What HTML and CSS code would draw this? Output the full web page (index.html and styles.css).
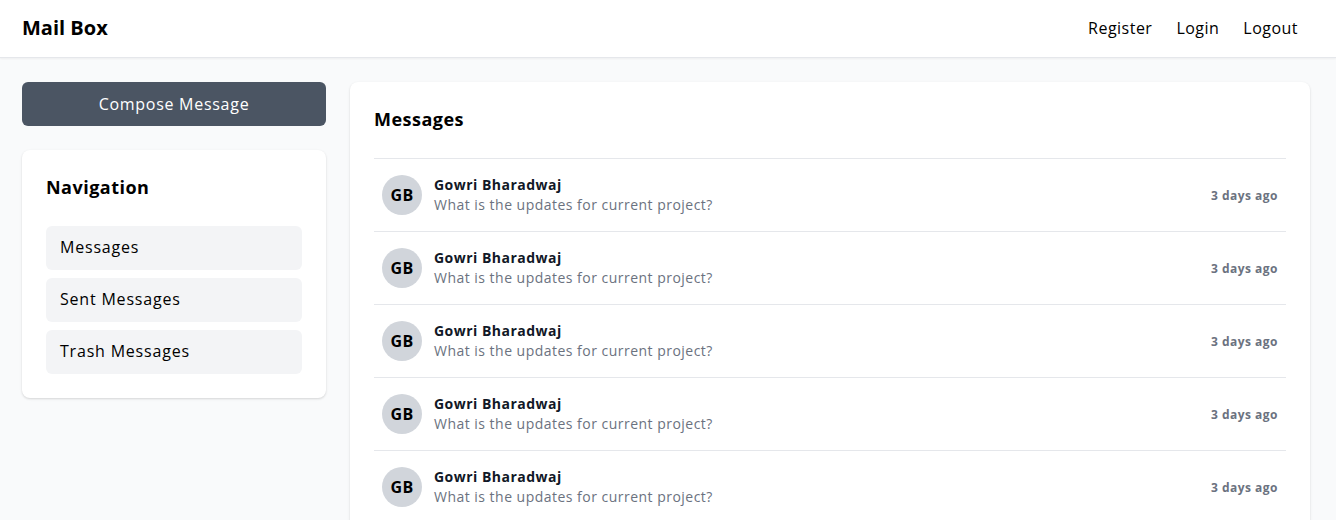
FILE: index.html
```html
<!DOCTYPE html>
<html lang="en">
<head>
<meta charset="utf-8">
<title>Mail Box</title>
<link rel="stylesheet" href="styles.css">
</head>
<body>
<header class="topbar">
  <div class="brand">Mail Box</div>
  <nav class="toplinks">
    <a href="#">Register</a>
    <a href="#">Login</a>
    <a href="#">Logout</a>
  </nav>
</header>
<div class="layout">
  <aside class="sidebar">
    <button class="compose">Compose Message</button>
    <section class="card nav-card">
      <h2 class="card-title">Navigation</h2>
      <ul class="nav-list">
        <li><a href="#">Messages</a></li>
        <li><a href="#">Sent Messages</a></li>
        <li><a href="#">Trash Messages</a></li>
      </ul>
    </section>
  </aside>
  <main class="card messages-card">
    <h2 class="card-title">Messages</h2>
    <ul class="msg-list">
      <li class="msg">
        <div class="avatar">GB</div>
        <div class="msg-body"><div class="msg-name">Gowri Bharadwaj</div><div class="msg-text">What is the updates for current project?</div></div>
        <div class="msg-time">3 days ago</div>
      </li>
      <li class="msg">
        <div class="avatar">GB</div>
        <div class="msg-body"><div class="msg-name">Gowri Bharadwaj</div><div class="msg-text">What is the updates for current project?</div></div>
        <div class="msg-time">3 days ago</div>
      </li>
      <li class="msg">
        <div class="avatar">GB</div>
        <div class="msg-body"><div class="msg-name">Gowri Bharadwaj</div><div class="msg-text">What is the updates for current project?</div></div>
        <div class="msg-time">3 days ago</div>
      </li>
      <li class="msg">
        <div class="avatar">GB</div>
        <div class="msg-body"><div class="msg-name">Gowri Bharadwaj</div><div class="msg-text">What is the updates for current project?</div></div>
        <div class="msg-time">3 days ago</div>
      </li>
      <li class="msg">
        <div class="avatar">GB</div>
        <div class="msg-body"><div class="msg-name">Gowri Bharadwaj</div><div class="msg-text">What is the updates for current project?</div></div>
        <div class="msg-time">3 days ago</div>
      </li>
    </ul>
  </main>
</div>
</body>
</html>
```
FILE: styles.css
```css
* { box-sizing: border-box; }
html, body { margin: 0; padding: 0; }
body {
  font-family: "Open Sans", "DejaVu Sans", sans-serif;
  background: #f9fafb;
  color: #000;
  letter-spacing: 0.03em;
}
a { color: inherit; text-decoration: none; }
ul { list-style: none; margin: 0; padding: 0; }
h2 { margin: 0; }

.topbar {
  height: 58px;
  background: #fff;
  border-bottom: 1px solid #e5e7eb;
  box-shadow: 0 1px 2px rgba(0,0,0,0.05);
  display: flex;
  align-items: center;
  justify-content: space-between;
  padding: 0 38px 0 22px;
}
.brand { font-size: 20px; font-weight: 700; letter-spacing: 0; line-height: 26px; margin-top: -2px; }
.toplinks { display: flex; gap: 24px; font-size: 16px; line-height: 24px; margin-top: -2px; }

.layout {
  display: flex;
  gap: 24px;
  padding: 24px 26px 0 22px;
  align-items: flex-start;
}
.sidebar { width: 304px; flex: none; display: flex; flex-direction: column; gap: 24px; }
.compose {
  height: 44px;
  border: 0;
  border-radius: 6px;
  background: #4b5563;
  color: #fff;
  font: inherit;
  letter-spacing: 0.045em;
  font-size: 16px;
  padding-bottom: 2px;
  cursor: pointer;
}
.card {
  background: #fff;
  border-radius: 8px;
  box-shadow: 0 1px 3px rgba(0,0,0,0.1), 0 1px 2px rgba(0,0,0,0.06);
  padding: 24px;
}
.card-title { font-size: 18px; font-weight: 700; line-height: 26px; margin-bottom: 26px; }
.nav-list { display: flex; flex-direction: column; gap: 8px; }
.nav-list a {
  display: block;
  height: 44px;
  line-height: 42px;
  padding: 0 14px;
  background: #f3f4f6;
  border-radius: 6px;
  font-size: 16px;
  letter-spacing: 0.05em;
}
.messages-card { flex: 1; min-height: 460px; }
.msg-list { border-top: 1px solid #e5e7eb; }
.msg {
  display: flex;
  align-items: center;
  gap: 12px;
  padding: 16px 8px;
  border-bottom: 1px solid #e5e7eb;
}
.avatar {
  width: 40px; height: 40px; flex: none;
  border-radius: 50%;
  background: #d1d5db;
  display: flex; align-items: center; justify-content: center;
  font-size: 16px; font-weight: 700;
  letter-spacing: 0.02em;
}
.msg-body { flex: 1; margin-top: -1px; }
.msg-name { font-size: 14px; font-weight: 700; line-height: 20px; color: #111827; }
.msg-text { font-size: 14px; line-height: 20px; color: #6b7280; }
.msg-time { font-size: 12px; font-weight: 700; color: #6b7280; }
```
